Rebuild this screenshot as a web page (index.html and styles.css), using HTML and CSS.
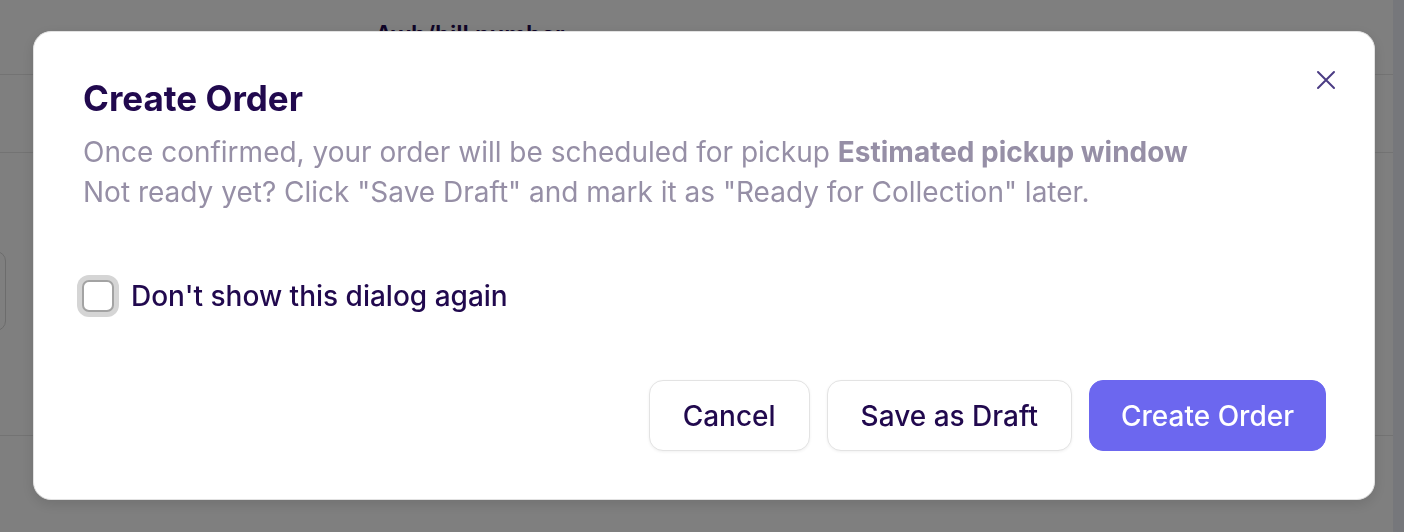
FILE: index.html
```html
<!DOCTYPE html>
<html lang="en">
<head>
<meta charset="utf-8">
<title>Create Order</title>
<link rel="stylesheet" href="styles.css">
</head>
<body>
<div class="page">
  <div class="page-main">
    <div class="section section-head">
      <div class="field-label">Awb/bill number</div>
    </div>
    <div class="section section-row"></div>
    <div class="section section-form">
      <div class="stub-input"></div>
    </div>
    <div class="section section-foot"></div>
  </div>
  <div class="scroll-track"></div>
</div>

<div class="overlay">
  <div class="modal" role="dialog" aria-labelledby="dlg-title">
    <button class="close-btn" aria-label="Close">
      <svg width="20" height="20" viewBox="0 0 20 20" fill="none" stroke="currentColor" stroke-width="2" stroke-linecap="round">
        <path d="M2 2 L18 18 M18 2 L2 18"/>
      </svg>
    </button>
    <h2 class="modal-title" id="dlg-title">Create Order</h2>
    <p class="modal-desc">Once confirmed, your order will be scheduled for pickup <strong>Estimated pickup window</strong><br>Not ready yet? Click "Save Draft" and mark it as "Ready for Collection" later.</p>
    <label class="check-row">
      <span class="check-box"></span>
      <span class="check-label">Don't show this dialog again</span>
    </label>
    <div class="actions">
      <button class="btn btn-outline">Cancel</button>
      <button class="btn btn-outline">Save as Draft</button>
      <button class="btn btn-primary">Create Order</button>
    </div>
  </div>
</div>
</body>
</html>
```

FILE: styles.css
```css
* { box-sizing: border-box; }

html, body {
  margin: 0;
  padding: 0;
  height: 100%;
}

body {
  font-family: Inter, "Noto Sans", sans-serif;
  background: #ffffff;
  overflow: hidden;
}

/* ---------- page behind the dialog ---------- */
.page {
  display: flex;
  height: 532px;
}

.page-main {
  flex: 1;
  display: flex;
  flex-direction: column;
}

.scroll-track {
  width: 11px;
  background: #eceef6;
}

.section {
  border-bottom: 1px solid #e6e6e6;
}

.section-head {
  height: 75px;
  padding: 20px 0 0 375px;
}

.field-label {
  font-size: 24px;
  font-weight: 600;
  color: #21094e;
}

.section-row {
  height: 78px;
}

.section-form {
  height: 283px;
  padding-top: 98px;
}

.stub-input {
  width: 40px;
  height: 80px;
  margin-left: -34px;
  border: 1px solid #d8d8d8;
  border-radius: 10px;
}

.section-foot {
  flex: 1;
  border-bottom: none;
}

/* ---------- overlay + dialog ---------- */
.overlay {
  position: fixed;
  inset: 0;
  background: rgba(0, 0, 0, 0.5);
  padding: 31px 0 0 33px;
}

.modal {
  position: relative;
  width: 1342px;
  background: #ffffff;
  border: 1px solid #e2e2e2;
  border-radius: 18px;
  box-shadow: 0 4px 14px rgba(0, 0, 0, 0.12);
  padding: 44px 48px 48px 49px;
  display: flex;
  flex-direction: column;
}

.close-btn {
  position: absolute;
  top: 38px;
  right: 38px;
  width: 20px;
  height: 20px;
  padding: 0;
  border: none;
  background: none;
  color: #4b3c84;
  display: flex;
}

.modal-title {
  margin: 0;
  font-size: 35px;
  line-height: 44px;
  font-weight: 700;
  color: #21094e;
}

.modal-desc {
  margin: 12px 0 0;
  font-size: 28px;
  line-height: 40px;
  color: #968fa6;
}

.modal-desc strong {
  font-weight: 700;
}

.check-row {
  margin-top: 67px;
  display: flex;
  align-items: center;
  gap: 17px;
}

.check-box {
  flex: none;
  width: 32px;
  height: 32px;
  margin-left: -1px;
  border: 2px solid #a3a3a3;
  border-radius: 7px;
  background: #ffffff;
  box-shadow: 0 0 0 5px #d5d5d5;
}

.check-label {
  font-size: 28px;
  line-height: 34px;
  font-weight: 500;
  color: #21094e;
}

.actions {
  margin-top: 67px;
  display: flex;
  justify-content: flex-end;
  gap: 17px;
}

.btn {
  height: 71px;
  padding: 0 33px;
  border-radius: 14px;
  font-family: Inter, "Noto Sans", sans-serif;
  font-size: 28px;
  font-weight: 500;
  cursor: pointer;
}

.btn-outline {
  background: #ffffff;
  border: 1px solid #e3e3e3;
  color: #21094e;
  box-shadow: 0 1px 3px rgba(0, 0, 0, 0.06);
}

.btn-primary {
  padding: 0 31px;
  background: #6c67ef;
  border: 1px solid #6c67ef;
  color: #ffffff;
}
```
